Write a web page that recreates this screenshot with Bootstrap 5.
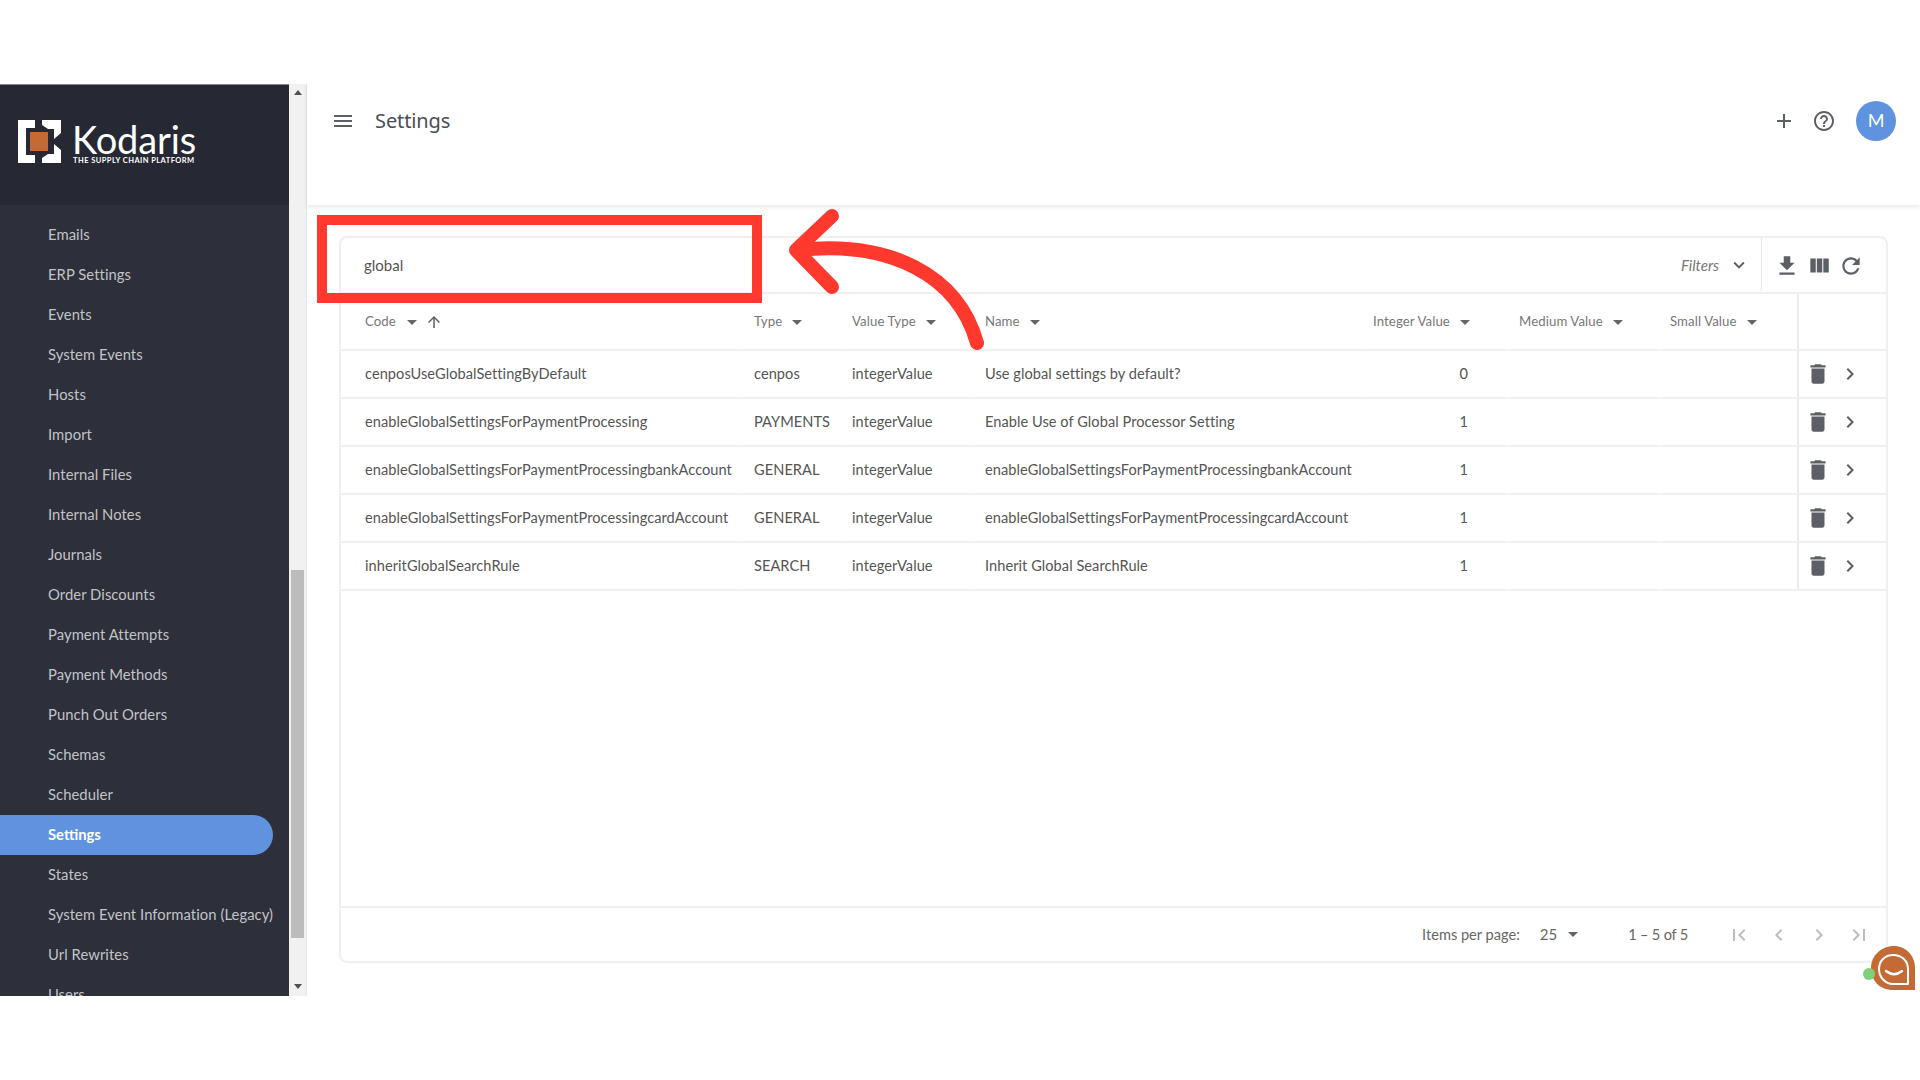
<!DOCTYPE html>
<html lang="en">
<head>
<meta charset="utf-8">
<title>Settings</title>
<link href="https://cdn.jsdelivr.net/npm/bootstrap@5.3.0/dist/css/bootstrap.min.css" rel="stylesheet">
<style>
html,body{height:100%;background:#fff;overflow:hidden}
body{font-family:"Lato","Liberation Sans",sans-serif;color:#555}
.stage{position:relative;width:1920px;height:1080px;padding-top:84px}
.frame{height:912px}
.side{width:289px;background:#2d2f3a}
.brand{height:121px;background:#262933;padding:36px 0 0 18px;box-shadow:inset 0 1px 0 #8a8b90}
.brandtext{margin-left:11px}
.brandname{font-size:38px;line-height:27px;color:#fff;letter-spacing:-.1px;margin-top:6px}
.brandtag{font-size:7.5px;line-height:10px;font-weight:700;color:#fff;letter-spacing:.44px;white-space:nowrap;margin:3px 0 0 1px}
.navlist{padding-top:10px;overflow:hidden}
.navrow{display:block;height:40px;line-height:38px;padding-left:48px;width:273px;font-size:14.8px;color:#c3c3c6;text-decoration:none;white-space:nowrap;letter-spacing:.06px;border-radius:0 20px 20px 0}
.navrow.on{background:#5f93e0;color:#fff;font-weight:700;letter-spacing:0}
.sbar{width:18px;background:#f1f1f1;border-right:1px solid #e6e6e6;padding:0 2px;position:relative}
.sthumb{position:absolute;left:2px;width:13px;top:486px;height:368px;background:#bcbcbc}
.sarrow{position:absolute;left:4px;border-left:4px solid transparent;border-right:4px solid transparent}
.sarrow.up{top:6px;border-bottom:5px solid #505050;left:5px}
.sarrow.dn{bottom:7px;border-top:5px solid #505050;left:5px}
.workarea{min-width:0}
.topbar{height:121px;box-shadow:0 2px 4px rgba(0,0,0,.09);padding:0 24px 48px 24px;position:relative}
.pagetitle{font-family:"Noto Sans",sans-serif;font-size:20px;color:#4a4d55;margin-left:20px;letter-spacing:-.1px}
.tico{fill:#5d5f66;display:block}
.avatar{width:40px;height:40px;border-radius:50%;background:#5f93e0;color:#fff;font-size:18px;margin-left:20px}
.panel{margin:31px 32px 0 32px;height:727px;border:2px solid #f0f0f0;border-radius:8px;background:#fff}
.toolrow{height:56px;border-bottom:2px solid #f0f0f0;flex:none}
.searchzone{width:1421px;padding-left:23px;border-right:1px solid #e6e6e6;border-bottom-right-radius:4px;font-size:15px;color:#555}
.filters{font-style:italic;font-size:15px;color:#777;margin-right:9px}
.chevgap{margin-right:11px}
.toolicons{padding:1px 0 0 12px;gap:6px}
.tablezone{flex:1 1 auto;min-height:0}
.gridtable{table-layout:fixed;width:1545px;margin:0;border-collapse:separate;border-spacing:0}
.gridtable th,.gridtable td{height:48px;padding:0 0 0 10px;border:0;border-bottom:2px solid #f0f0f0;border-right:1px solid #fff;vertical-align:middle;white-space:nowrap;font-weight:400;color:#555;font-size:14.6px;letter-spacing:.05px;background:transparent;box-shadow:none;overflow:visible}
.gridtable th{height:57px;font-size:13.2px;color:#777;letter-spacing:.1px}
.gridtable .first{padding-left:24px}
.gridtable .namecol{padding-left:9px}
.gridtable .acts{border-left:2px solid #ececec;border-right:0;padding-left:6px}
.gridtable td.num{text-align:right;padding:0 40px 0 0}
.w-code{width:403px}.w-type{width:98px}.w-vtype{width:134px}.w-name{width:387px}.w-int{width:146px}.w-med{width:151px}.w-small{width:137px}.w-acts{width:89px}
.caret{display:inline-block;width:0;height:0;border-left:5px solid transparent;border-right:5px solid transparent;border-top:5px solid #666;margin-left:10px;vertical-align:middle}
.codecaret{margin-left:11px}
.rowacts{gap:7px}
.footrow{height:55px;border-top:2px solid #f0f0f0;flex:none;font-size:14.6px;color:#666;padding-right:15px}
.sizeval{margin-left:20px;font-size:15px}
.sizecaret{margin-left:11px}
.rangeval{margin-left:50px;letter-spacing:-.2px}
.pagerbox{margin-left:39px}
.pagerico{fill:#bdbdbd;display:block}
.annot{position:absolute}
.overlayart{left:0;top:0}
.hotbox{left:317px;top:215px;width:445px;height:88px;border:10px solid #ff392e}
.chatdot{left:1863px;top:968px;width:12px;height:12px;border-radius:50%;background:#7fd07a}
</style>
</head>
<body>
<svg width="0" height="0" class="position-absolute">
<symbol id="i-menu" viewBox="0 0 24 24"><path d="M3 18h18v-2H3v2zm0-5h18v-2H3v2zm0-7v2h18V6H3z"/></symbol>
<symbol id="i-add" viewBox="0 0 24 24"><path d="M19 13h-6v6h-2v-6H5v-2h6V5h2v6h6v2z"/></symbol>
<symbol id="i-help" viewBox="0 0 24 24"><path d="M11 18h2v-2h-2v2zm1-16C6.48 2 2 6.48 2 12s4.48 10 10 10 10-4.48 10-10S17.52 2 12 2zm0 18c-4.41 0-8-3.59-8-8s3.59-8 8-8 8 3.59 8 8-3.59 8-8 8zm0-14c-2.21 0-4 1.79-4 4h2c0-1.1.9-2 2-2s2 .9 2 2c0 2-3 1.75-3 5h2c0-2.25 3-2.5 3-5 0-2.21-1.79-4-4-4z"/></symbol>
<symbol id="i-down" viewBox="0 0 24 24"><path d="M19 9h-4V3H9v6H5l7 7 7-7zM5 18v2h14v-2H5z"/></symbol>
<symbol id="i-cols" viewBox="0 0 24 24"><path d="M10 18h5V5h-5v13zm-6 0h5V5H4v13zM16 5v13h5V5h-5z"/></symbol>
<symbol id="i-refresh" viewBox="0 0 24 24"><path d="M17.65 6.35C16.2 4.9 14.21 4 12 4c-4.42 0-7.99 3.58-7.99 8s3.57 8 7.99 8c3.73 0 6.84-2.55 7.73-6h-2.08c-.82 2.33-3.04 4-5.65 4-3.31 0-6-2.69-6-6s2.69-6 6-6c1.66 0 3.14.69 4.22 1.78L13 11h7V4l-2.35 2.35z"/></symbol>
<symbol id="i-trash" viewBox="0 0 24 24"><path d="M6 19c0 1.1.9 2 2 2h8c1.1 0 2-.9 2-2V7H6v12zM19 4h-3.5l-1-1h-5l-1 1H5v2h14V4z"/></symbol>
<symbol id="i-right" viewBox="0 0 24 24"><path d="M10 6L8.59 7.41 13.17 12l-4.58 4.59L10 18l6-6z"/></symbol>
<symbol id="i-left" viewBox="0 0 24 24"><path d="M15.41 7.41L14 6l-6 6 6 6 1.41-1.41L10.83 12z"/></symbol>
<symbol id="i-first" viewBox="0 0 24 24"><path d="M18.41 16.59L13.82 12l4.59-4.59L17 6l-6 6 6 6zM6 6h2v12H6z"/></symbol>
<symbol id="i-last" viewBox="0 0 24 24"><path d="M5.59 7.41L10.18 12l-4.59 4.59L7 18l6-6-6-6zM16 6h2v12h-2z"/></symbol>
<symbol id="i-up" viewBox="0 0 24 24"><path d="M4 12l1.41 1.41L11 7.83V20h2V7.83l5.58 5.59L20 12l-8-8-8 8z"/></symbol>
<symbol id="i-more" viewBox="0 0 24 24"><path d="M16.59 8.59L12 13.17 7.41 8.59 6 10l6 6 6-6z"/></symbol>
</svg>

<div class="stage">
<div class="frame d-flex">
  <aside class="side d-flex flex-column flex-shrink-0 overflow-hidden">
    <div class="brand d-flex flex-shrink-0">
      <svg width="43" height="43" viewBox="0 0 43 43" class="flex-shrink-0">
        <path fill="#fff" d="M0 0h17v8H8v27h9v8H0z"/>
        <path fill="#fff" d="M24 0H43V13L36 19V9H30L24 5z"/>
        <path fill="#fff" d="M24 43H43V30L36 24V34H30L24 38z"/>
        <rect x="12" y="12" width="18" height="19" fill="#c46a35"/>
      </svg>
      <div class="brandtext">
        <div class="brandname">Kodaris</div>
        <div class="brandtag">THE SUPPLY CHAIN PLATFORM</div>
      </div>
    </div>
    <nav class="navlist">
      <a class="navrow" href="#">Emails</a>
      <a class="navrow" href="#">ERP Settings</a>
      <a class="navrow" href="#">Events</a>
      <a class="navrow" href="#">System Events</a>
      <a class="navrow" href="#">Hosts</a>
      <a class="navrow" href="#">Import</a>
      <a class="navrow" href="#">Internal Files</a>
      <a class="navrow" href="#">Internal Notes</a>
      <a class="navrow" href="#">Journals</a>
      <a class="navrow" href="#">Order Discounts</a>
      <a class="navrow" href="#">Payment Attempts</a>
      <a class="navrow" href="#">Payment Methods</a>
      <a class="navrow" href="#">Punch Out Orders</a>
      <a class="navrow" href="#">Schemas</a>
      <a class="navrow" href="#">Scheduler</a>
      <a class="navrow on" href="#">Settings</a>
      <a class="navrow" href="#">States</a>
      <a class="navrow" href="#">System Event Information (Legacy)</a>
      <a class="navrow" href="#">Url Rewrites</a>
      <a class="navrow" href="#">Users</a>
    </nav>
  </aside>
  <div class="sbar flex-shrink-0"><span class="sarrow up"></span><span class="sthumb"></span><span class="sarrow dn"></span></div>
  <main class="workarea flex-grow-1 d-flex flex-column">
    <header class="topbar d-flex align-items-center flex-shrink-0">
      <svg class="tico" width="24" height="24"><use href="#i-menu"/></svg>
      <div class="pagetitle flex-grow-1">Settings</div>
      <svg class="tico me-3" width="24" height="24"><use href="#i-add"/></svg>
      <svg class="tico" width="24" height="24"><use href="#i-help"/></svg>
      <div class="avatar d-flex align-items-center justify-content-center">M</div>
    </header>
    <section class="panel d-flex flex-column">
      <div class="toolrow d-flex">
        <div class="searchzone d-flex align-items-center">
          <span class="flex-grow-1">global</span>
          <span class="filters">Filters</span>
          <svg class="tico chevgap" width="22" height="22"><use href="#i-more"/></svg>
        </div>
        <div class="toolicons d-flex align-items-center">
          <svg class="tico" width="26" height="26"><use href="#i-down"/></svg>
          <svg class="tico" width="26" height="26"><use href="#i-cols"/></svg>
          <svg class="tico" width="26" height="26"><use href="#i-refresh"/></svg>
        </div>
      </div>
      <div class="tablezone">
        <table class="table gridtable">
          <colgroup><col class="w-code"><col class="w-type"><col class="w-vtype"><col class="w-name"><col class="w-int"><col class="w-med"><col class="w-small"><col class="w-acts"></colgroup>
          <thead><tr>
            <th class="first">Code<span class="caret codecaret"></span><svg class="ms-2 align-middle" fill="#5d5f66" width="18" height="18"><use href="#i-up"/></svg></th>
            <th>Type<span class="caret"></span></th>
            <th>Value Type<span class="caret"></span></th>
            <th class="namecol">Name<span class="caret"></span></th>
            <th>Integer Value<span class="caret"></span></th>
            <th>Medium Value<span class="caret"></span></th>
            <th>Small Value<span class="caret"></span></th>
            <th class="acts"></th>
          </tr></thead>
          <tbody>
            <tr><td class="first">cenposUseGlobalSettingByDefault</td><td>cenpos</td><td>integerValue</td><td class="namecol">Use global settings by default?</td><td class="num">0</td><td></td><td></td><td class="acts"><div class="d-flex align-items-center rowacts"><svg class="tico" width="26" height="26"><use href="#i-trash"/></svg><svg class="tico" width="24" height="24"><use href="#i-right"/></svg></div></td></tr>
            <tr><td class="first">enableGlobalSettingsForPaymentProcessing</td><td>PAYMENTS</td><td>integerValue</td><td class="namecol">Enable Use of Global Processor Setting</td><td class="num">1</td><td></td><td></td><td class="acts"><div class="d-flex align-items-center rowacts"><svg class="tico" width="26" height="26"><use href="#i-trash"/></svg><svg class="tico" width="24" height="24"><use href="#i-right"/></svg></div></td></tr>
            <tr><td class="first">enableGlobalSettingsForPaymentProcessingbankAccount</td><td>GENERAL</td><td>integerValue</td><td class="namecol">enableGlobalSettingsForPaymentProcessingbankAccount</td><td class="num">1</td><td></td><td></td><td class="acts"><div class="d-flex align-items-center rowacts"><svg class="tico" width="26" height="26"><use href="#i-trash"/></svg><svg class="tico" width="24" height="24"><use href="#i-right"/></svg></div></td></tr>
            <tr><td class="first">enableGlobalSettingsForPaymentProcessingcardAccount</td><td>GENERAL</td><td>integerValue</td><td class="namecol">enableGlobalSettingsForPaymentProcessingcardAccount</td><td class="num">1</td><td></td><td></td><td class="acts"><div class="d-flex align-items-center rowacts"><svg class="tico" width="26" height="26"><use href="#i-trash"/></svg><svg class="tico" width="24" height="24"><use href="#i-right"/></svg></div></td></tr>
            <tr><td class="first">inheritGlobalSearchRule</td><td>SEARCH</td><td>integerValue</td><td class="namecol">Inherit Global SearchRule</td><td class="num">1</td><td></td><td></td><td class="acts"><div class="d-flex align-items-center rowacts"><svg class="tico" width="26" height="26"><use href="#i-trash"/></svg><svg class="tico" width="24" height="24"><use href="#i-right"/></svg></div></td></tr>
          </tbody>
        </table>
      </div>
      <div class="footrow d-flex align-items-center justify-content-end">
        <span>Items per page:</span>
        <span class="sizeval">25</span><span class="caret sizecaret"></span>
        <span class="rangeval">1 – 5 of 5</span>
        <div class="d-flex pagerbox gap-3">
          <svg class="pagerico" width="24" height="24"><use href="#i-first"/></svg>
          <svg class="pagerico" width="24" height="24"><use href="#i-left"/></svg>
          <svg class="pagerico" width="24" height="24"><use href="#i-right"/></svg>
          <svg class="pagerico" width="24" height="24"><use href="#i-last"/></svg>
        </div>
      </div>
    </section>
  </main>
</div>

<div class="annot hotbox"></div>
<svg class="annot overlayart" width="1920" height="1080" fill="none" stroke="#ff392e" stroke-width="14" stroke-linecap="round" stroke-linejoin="round" pointer-events="none">
  <path d="M977 343C958 275 890 240 798 250"/>
  <path d="M832 216L796 250L832 287"/>
  <path stroke="none" fill="#c46a35" d="M1871 968C1871 955 1882 946 1894 946C1906 946 1915 956 1915 968V990H1893C1880 990 1871 981 1871 968Z"/>
  <path stroke="#fff" stroke-width="2" d="M1879 969C1879 961 1885 955 1893 955C1902 955 1908 961 1908 969V984H1893C1885 984 1879 977 1879 969Z"/>
  <path stroke="#fff" stroke-width="2.5" d="M1886 971C1891 975 1897 975 1902 971"/>
</svg>
<div class="annot chatdot"></div>
</div>
</body>
</html>
